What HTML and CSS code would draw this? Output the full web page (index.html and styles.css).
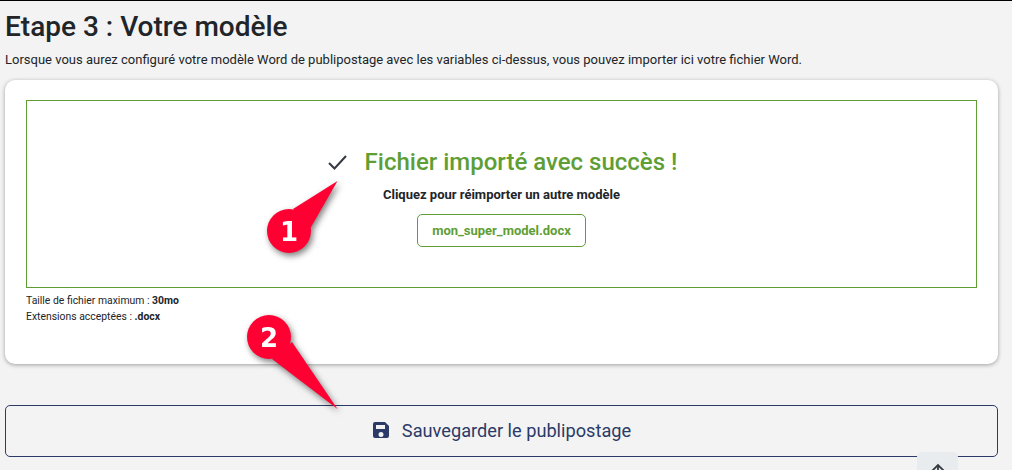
FILE: index.html
```html
<!DOCTYPE html>
<html lang="fr">
<head>
    <meta charset="UTF-8">
    <meta name="viewport" content="width=device-width, initial-scale=1.0">
    <title>Etape 3 : Votre modèle</title>
    <link rel="stylesheet" href="styles.css">
</head>
<body>
    <main class="page">
        <h1 class="step-title">Etape 3 : Votre modèle</h1>
        <p class="step-intro">Lorsque vous aurez configuré votre modèle Word de publipostage avec les variables ci-dessus, vous pouvez importer ici votre fichier Word.</p>

        <section class="card">
            <div class="dropzone">
                <div class="success-line">
                    <svg class="check-icon" width="22" height="18" viewBox="0 0 22 18">
                        <path d="M3 10l5.500 5.500L20 3" fill="none" stroke="#343a40" stroke-width="2"/>
                    </svg>
                    <span class="success-title">Fichier importé avec succès !</span>
                </div>
                <p class="reimport">Cliquez pour réimporter un autre modèle</p>
                <span class="file-chip">mon_super_model.docx</span>
            </div>
            <p class="file-info">Taille de fichier maximum : <b>30mo</b></p>
            <p class="file-info">Extensions acceptées : <b>.docx</b></p>
        </section>

        <button class="save-btn">
            <svg class="save-icon" width="18" height="18" viewBox="0 0 18 18">
                <path fill-rule="evenodd" fill="#2b3a67" d="M3 1h10l4 4v10a2 2 0 0 1-2 2H3a2 2 0 0 1-2-2V3a2 2 0 0 1 2-2zm1 3v4h9V4zm5 7a2.500 2.500 0 1 0 0 5 2.500 2.500 0 0 0 0-5z"/>
            </svg>
            Sauvegarder le publipostage
        </button>
    </main>

    <div class="scroll-top">
        <svg width="18" height="18" viewBox="0 0 18 18">
            <path d="M2 10l7-7 7 7M9 3v14" fill="none" stroke="#343a40" stroke-width="1.800"/>
        </svg>
    </div>

    <svg class="callout callout-one" width="90" height="90" viewBox="0 0 90 90">
        <circle cx="27" cy="54" r="22" fill="#ff0033"/>
        <path fill="#ff0033" d="M75.500 4L31 32 48.500 51z"/>
        <text x="27" y="64" class="callout-num">1</text>
    </svg>
    <svg class="callout callout-two" width="110" height="110" viewBox="0 0 110 110">
        <circle cx="27" cy="24" r="22" fill="#ff0033"/>
        <path fill="#ff0033" d="M95.500 96L50 29 30 46z"/>
        <text x="27" y="34" class="callout-num">2</text>
    </svg>
</body>
</html>
```

FILE: styles.css
```css
html, body {
    height: 470px;
    overflow: hidden;
}
body {
    margin: 0;
    background-color: #f3f3f3;
    border-top: 1px solid #000;
    box-sizing: border-box;
    font-family: Roboto, Arial, sans-serif;
    color: #212529;
    position: relative;
}
.page {
    padding: 0 14px 0 5px;
}
.step-title {
    margin: 9px 0 0;
    font-size: 28px;
    line-height: 34px;
    font-weight: 500;
}
.step-intro {
    margin: 7px 0 0;
    font-size: 13px;
    line-height: 18px;
}
.card {
    margin-top: 11px;
    height: 284px;
    box-sizing: border-box;
    padding: 20px 21px;
    background-color: #fff;
    border-radius: 10px;
    box-shadow: 0 1px 4px rgba(0, 0, 0, 0.35);
}
.dropzone {
    height: 188px;
    box-sizing: border-box;
    border: 1px solid #5e9e35;
    display: flex;
    flex-direction: column;
    align-items: center;
    padding-top: 47px;
}
.success-line {
    display: flex;
    align-items: center;
    gap: 17px;
    height: 28px;
}
.success-title {
    font-size: 24px;
    font-weight: 500;
    color: #5e9e35;
}
.reimport {
    margin: 10px 0 0;
    font-size: 13px;
    line-height: 18px;
    font-weight: 700;
}
.file-chip {
    margin-top: 10px;
    padding: 0 14px;
    height: 33px;
    line-height: 31px;
    box-sizing: border-box;
    border: 1px solid #5e9e35;
    border-radius: 5px;
    font-size: 13px;
    font-weight: 700;
    color: #5e9e35;
}
.file-info {
    margin: 0;
    font-size: 10.400px;
    line-height: 16px;
}
.dropzone + .file-info {
    margin-top: 5px;
}
.save-btn {
    margin-top: 41px;
    width: 100%;
    height: 52px;
    padding: 0 0 2px;
    display: flex;
    align-items: center;
    justify-content: center;
    gap: 12px;
    background: transparent;
    border: 1px solid #2b3a67;
    border-radius: 5px;
    font-family: Roboto, Arial, sans-serif;
    font-size: 18.200px;
    color: #2b3a67;
}
.scroll-top {
    position: absolute;
    left: 917px;
    top: 451px;
    width: 41px;
    height: 41px;
    background-color: #e9ecef;
    border-radius: 5px;
    display: flex;
    justify-content: center;
    padding-top: 10px;
    box-sizing: border-box;
}
.callout {
    position: absolute;
    overflow: visible;
    filter: drop-shadow(2px 3px 3px rgba(0, 0, 0, 0.5));
}
.callout-one {
    left: 262px;
    top: 176px;
}
.callout-two {
    left: 242px;
    top: 312px;
}
.callout-num {
    font-family: "DejaVu Sans", sans-serif;
    font-size: 26px;
    font-weight: 700;
    fill: #fff;
    text-anchor: middle;
}
```
